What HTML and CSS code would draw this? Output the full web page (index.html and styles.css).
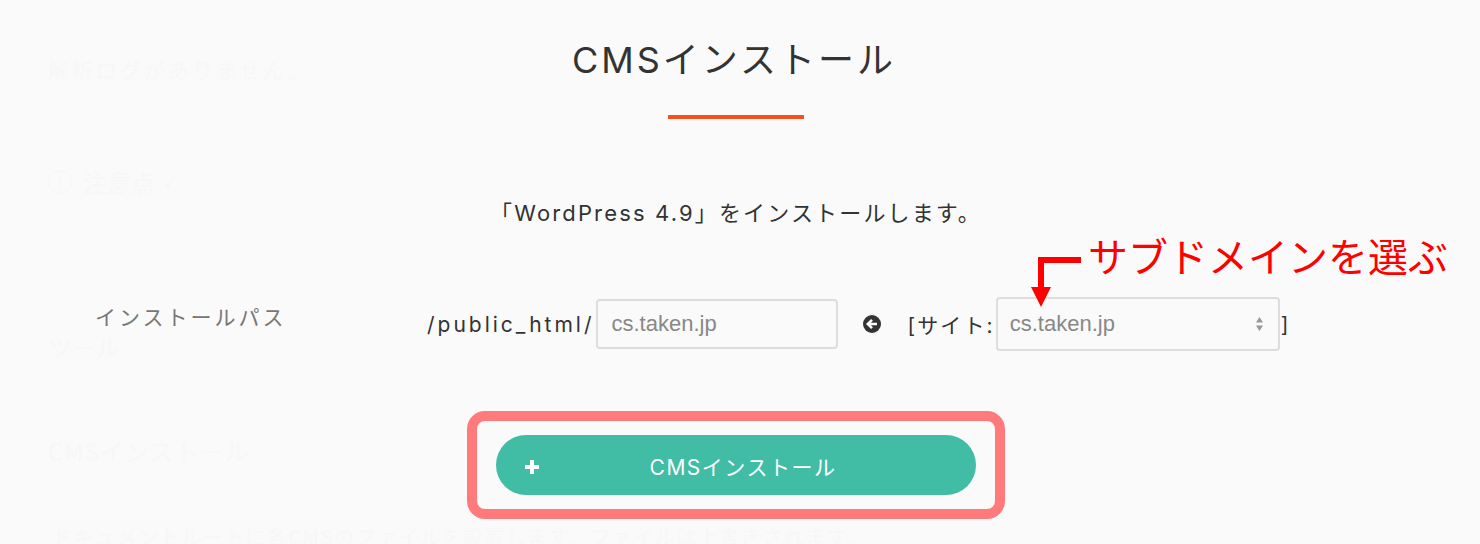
FILE: index.html
```html
<!DOCTYPE html>
<html lang="ja">
<head>
    <meta charset="UTF-8">
    <title>CMSインストール</title>
    <link rel="stylesheet" href="styles.css">
</head>
<body>
    <div class="backdrop">
        <p class="bg-log">解析ログがありません。</p>
        <p class="bg-note"><span class="bg-mark">!</span>注意点 <span class="bg-check">✓</span></p>
        <p class="bg-tool">ツール</p>
        <p class="bg-cms">CMSインストール</p>
        <p class="bg-doc">ドキュメントルートに各CMSのファイルを設置します。ファイルは上書きされます。</p>
    </div>

    <div class="modal">
        <h2 class="modal-title">CMSインストール</h2>
        <div class="title-rule"></div>
        <p class="modal-lead">「WordPress 4.9」をインストールします。</p>

        <div class="form-row">
            <label class="form-label" for="path">インストールパス</label>
            <div class="form-fields">
                <span class="path-prefix">/public_html/</span>
                <input class="path-input" id="path" type="text" value="cs.taken.jp">
                <svg class="back-icon" width="20" height="20" viewBox="0 0 20 20">
                    <circle cx="10" cy="10" r="9" fill="#333"/>
                    <path d="M15 10H6.500M10 5.800L5.800 10L10 14.200" fill="none" stroke="#fafafa" stroke-width="2.600"/>
                </svg>
                <span class="site-open">[サイト:</span>
                <div class="site-select">
                    <span>cs.taken.jp</span>
                    <svg width="9" height="16" viewBox="0 0 9 16">
                        <path d="M4.500 1L8 6.500H1ZM4.500 15L1 9.500H8Z" fill="#999"/>
                    </svg>
                </div>
                <span class="site-close">]</span>
            </div>
        </div>

        <div class="submit-frame">
            <button class="submit-btn" type="button">
                <span class="submit-plus">
                    <svg width="16" height="16" viewBox="0 0 16 16">
                        <path d="M8 1V15M1 8H15" stroke="#fff" stroke-width="4"/>
                    </svg>
                </span>
                CMSインストール
            </button>
        </div>
    </div>

    <div class="callout">
        <svg class="callout-arrow" width="46" height="50" viewBox="0 0 46 50">
            <path d="M43 3H3V32" fill="none" stroke="#f00" stroke-width="6"/>
            <path d="M-7 30H13L3 50Z" fill="#f00"/>
        </svg>
        <span class="callout-text">サブドメインを選ぶ</span>
    </div>
</body>
</html>
```

FILE: styles.css
```css
* {
    box-sizing: border-box;
}

body {
    margin: 0;
    height: 544px;
    overflow: hidden;
    position: relative;
    background-color: #fafafa;
    font-family: "Inter", "Noto Sans CJK JP", sans-serif;
    color: #333;
}

/* page behind the modal, almost hidden by the overlay */
.backdrop {
    padding: 55px 0 0 48px;
    color: #f7f7f7;
    font-family: "Noto Sans CJK JP", sans-serif;
}

.backdrop p {
    margin: 0;
    white-space: nowrap;
}

.bg-log {
    font-size: 21px;
    line-height: 28px;
    letter-spacing: 3px;
}

.bg-note {
    margin-top: 84px !important;
    font-size: 24px;
    line-height: 30px;
    display: flex;
    align-items: center;
}

.bg-mark {
    width: 24px;
    height: 24px;
    margin-right: 11px;
    border: 1px solid #f7f7f7;
    border-radius: 50%;
    font-size: 16px;
    line-height: 22px;
    text-align: center;
}

.bg-check {
    margin-left: 10px;
    font-size: 14px;
}

.bg-tool {
    margin-top: 135px !important;
    font-size: 24px;
    line-height: 30px;
}

.bg-cms {
    margin-top: 74px !important;
    font-size: 24px;
    line-height: 30px;
    letter-spacing: 1px;
}

.bg-doc {
    margin-top: 56px !important;
    padding-left: 4px;
    font-size: 20px;
    line-height: 30px;
    letter-spacing: 1.500px;
}

.modal {
    position: absolute;
    inset: 0;
    display: flex;
    flex-direction: column;
    align-items: center;
    padding-right: 8px;
}

.modal-title {
    margin: 33px 0 0;
    font-size: 36px;
    line-height: 54px;
    font-weight: 400;
    letter-spacing: 3px;
    position: relative;
    left: -2px;
}

.title-rule {
    width: 136px;
    height: 4px;
    margin-top: 28px;
    background-color: #f4511e;
}

.modal-lead {
    margin: 78px 0 0;
    font-size: 22px;
    line-height: 32px;
    letter-spacing: 2.150px;
}

.form-row {
    width: 100%;
    margin-top: 69px;
    padding-left: 95px;
    display: flex;
    align-items: center;
    height: 52px;
}

.form-label {
    width: 332px;
    font-size: 21px;
    color: #777;
    letter-spacing: 3px;
    position: relative;
    top: -8px;
}

.form-fields {
    display: flex;
    align-items: center;
}

.path-prefix {
    font-size: 21px;
    letter-spacing: 3px;
    margin-right: 1px;
}

.path-input {
    width: 242px;
    height: 50px;
    padding: 0 14px;
    border: 2px solid #ddd;
    border-radius: 4px;
    background: transparent;
    font-family: "Liberation Sans", sans-serif;
    font-size: 22px;
    color: #888;
}

.back-icon {
    margin: 0 26px 0 24px;
}

.site-open {
    font-size: 21px;
    letter-spacing: 2.100px;
    margin-right: 1px;
}

.site-select {
    width: 284px;
    height: 54px;
    padding: 0 14px 0 12px;
    border: 2px solid #ddd;
    border-radius: 4px;
    display: flex;
    align-items: center;
    justify-content: space-between;
    font-family: "Liberation Sans", sans-serif;
    font-size: 22px;
    color: #888;
}

.site-close {
    font-size: 21px;
    margin-left: 1px;
}

.submit-frame {
    width: 538px;
    height: 108px;
    margin-top: 61px;
    padding: 14px 18px 14px 19px;
    border: 10px solid #ff7b7b;
    border-radius: 18px;
}

.submit-btn {
    width: 480px;
    height: 60px;
    padding: 1px 0 0 14px;
    border: none;
    border-radius: 30px;
    background-color: #41bda5;
    color: #fff;
    font-family: "Inter", "Noto Sans CJK JP", sans-serif;
    font-size: 21px;
    letter-spacing: 1.500px;
    position: relative;
}

.submit-plus {
    position: absolute;
    left: 28px;
    top: 24px;
    line-height: 0;
}

/* red note drawn on top of the screenshot */
.callout {
    position: absolute;
    left: 1016px;
    top: 233px;
}

.callout-arrow {
    position: absolute;
    left: 22px;
    top: 24px;
    overflow: visible;
}

.callout-text {
    position: absolute;
    left: 72px;
    top: 0;
    font-size: 40px;
    line-height: 50px;
    color: #f00;
    white-space: nowrap;
}
```
